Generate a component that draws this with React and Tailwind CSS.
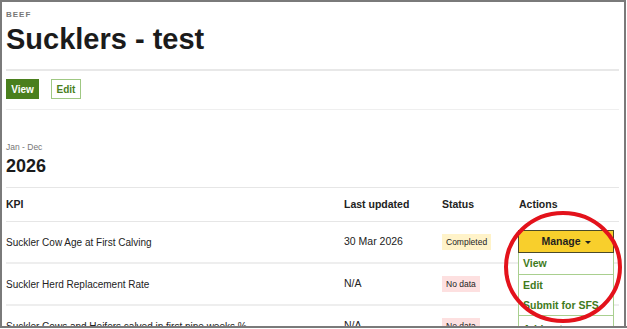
const rows = [
  { kpi: 'Suckler Cow Age at First Calving', updated: '30 Mar 2026', status: 'Completed' },
  { kpi: 'Suckler Herd Replacement Rate', updated: 'N/A', status: 'No data' },
  { kpi: 'Suckler Cows and Heifers calved in first nine weeks %', updated: 'N/A', status: 'No data' },
];

const StatusBadge = ({ status }) => {
  const tone = status === 'Completed' ? 'bg-[#fff3c9]' : 'bg-[#fde0e0]';
  return (
    <span className={`inline-block px-[4px] py-[3px] text-[8.5px] leading-[10px] text-[#222] ${tone}`}>
      {status}
    </span>
  );
};

const ManageMenu = () => (
  <div className="absolute left-[518px] top-[230px] w-[96px]">
    <div className="flex h-[23px] items-center justify-center gap-[4px] border border-[#4a4a2a] bg-[#f8cf2c] text-[10.5px] font-bold text-[#1f1f1f]">
      Manage
      <span className="mt-[1px] h-0 w-0 border-x-[3px] border-t-[3px] border-x-transparent border-t-[#1f1f1f]" />
    </div>
    <div className="h-[80px] border-x border-[#a9cf8f] bg-white text-[10.5px] font-bold text-[#3f7b1c]">
      <div className="flex h-[22px] items-center border-b border-[#a9cf8f] px-[4px]">View</div>
      <div className="flex h-[21px] items-center px-[4px]">Edit</div>
      <div className="flex h-[20px] items-center border-b border-[#a9cf8f] px-[4px]">Submit for SFS</div>
      <div className="flex h-[22px] items-center px-[4px] pt-[6px]">Add note</div>
    </div>
  </div>
);

export default function App() {
  return (
    <div className="relative h-[329px] w-[627px] overflow-hidden bg-white font-['Liberation_Sans',Arial,sans-serif]">
      <div className="h-[329px] w-[626px] border-2 border-b-0 border-[#7a7a7a] pl-[4px] pr-[5px]">
        <div className="pt-[8px] text-[8px] font-bold leading-[10px] tracking-[1px] text-[#777]">BEEF</div>
        <h1 className="mt-[2px] text-[29px] font-bold leading-[34px] text-[#1b1b1b]">Sucklers - test</h1>
        <div className="mt-[13px] h-[2px] bg-[#e8e8e8]" />

        <div className="flex gap-[12px] pt-[8px]">
          <button className="h-[20px] w-[33px] bg-[#4a7f1d] text-[10px] font-bold text-white">View</button>
          <button className="h-[20px] w-[30px] border border-[#9fc883] bg-white text-[10px] font-bold text-[#4a7f1d]">Edit</button>
        </div>
        <div className="mt-[10px] h-px bg-[#efefef]" />

        <div className="pt-[32px] text-[8.5px] leading-[11px] text-[#777]">Jan - Dec</div>
        <div className="mt-[2px] text-[18px] font-bold leading-[22px] text-[#1b1b1b]">2026</div>
        <div className="mt-[10px] h-px bg-[#e6e6e6]" />

        <div className="grid grid-cols-[338px_98px_77px_1fr] text-[10px] text-[#222]">
          <div className="flex h-[33px] items-center text-[10.5px] font-bold">KPI</div>
          <div className="flex h-[33px] items-center text-[10.5px] font-bold">Last updated</div>
          <div className="flex h-[33px] items-center text-[10.5px] font-bold">Status</div>
          <div className="flex h-[33px] items-center text-[10.5px] font-bold">Actions</div>
          <div className="col-span-4 h-px bg-[#e6e6e6]" />
          {rows.map((row) => (
            <div key={row.kpi} className="contents">
              <div className="flex h-[40px] items-center whitespace-nowrap">{row.kpi}</div>
              <div className="flex h-[40px] items-center text-[10.5px]">{row.updated}</div>
              <div className="flex h-[40px] items-center">
                <StatusBadge status={row.status} />
              </div>
              <div className="h-[40px]" />
              <div className="col-span-4 h-[2px] bg-[#eeeeee]" />
            </div>
          ))}
        </div>
      </div>

      <ManageMenu />

      <svg className="absolute left-0 top-0" width="627" height="329" viewBox="0 0 627 329">
        <ellipse cx="563" cy="267" rx="57" ry="54" fill="none" stroke="#e3121b" strokeWidth="4" />
      </svg>

      <div className="absolute bottom-0 left-0 h-[3px] w-[627px] border-t-2 border-[#7a7a7a] bg-white" />
    </div>
  );
}
